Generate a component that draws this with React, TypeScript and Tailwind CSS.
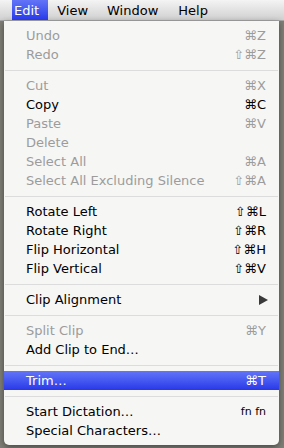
import React from 'react';

type Item =
  | { sep: true }
  | { label: string; key?: string; disabled?: boolean; active?: boolean; submenu?: boolean; small?: boolean };

const items: Item[] = [
  { label: 'Undo', key: '⌘Z', disabled: true },
  { label: 'Redo', key: '⇧⌘Z', disabled: true },
  { sep: true },
  { label: 'Cut', key: '⌘X', disabled: true },
  { label: 'Copy', key: '⌘C' },
  { label: 'Paste', key: '⌘V', disabled: true },
  { label: 'Delete', disabled: true },
  { label: 'Select All', key: '⌘A', disabled: true },
  { label: 'Select All Excluding Silence', key: '⇧⌘A', disabled: true },
  { sep: true },
  { label: 'Rotate Left', key: '⇧⌘L' },
  { label: 'Rotate Right', key: '⇧⌘R' },
  { label: 'Flip Horizontal', key: '⇧⌘H' },
  { label: 'Flip Vertical', key: '⇧⌘V' },
  { sep: true },
  { label: 'Clip Alignment', submenu: true },
  { sep: true },
  { label: 'Split Clip', key: '⌘Y', disabled: true },
  { label: 'Add Clip to End…' },
  { sep: true },
  { label: 'Trim…', key: '⌘T', active: true },
  { sep: true },
  { label: 'Start Dictation…', key: 'fn fn', small: true },
  { label: 'Special Characters…' },
];

function Row({ item }: { item: Exclude<Item, { sep: true }> }) {
  const color = item.active
    ? 'text-white bg-gradient-to-b from-[#6474f7] to-[#2a36e9]'
    : item.disabled
      ? 'text-[#9c9c9c]'
      : 'text-black';
  return (
    <div className={`flex h-[19px] items-center justify-between pl-[22px] pr-[13px] ${color}`}>
      <span>{item.label}</span>
      {item.key && <span className={item.small ? 'text-[11px]' : ''}>{item.key}</span>}
      {item.submenu && (
        <svg width="9" height="10" viewBox="0 0 9 10" className="mr-[-2px]">
          <path d="M0 0 L9 5 L0 10 Z" fill="#3a3a3a" />
        </svg>
      )}
    </div>
  );
}

export default function App() {
  return (
    <div
      className="w-[284px] h-[448px] bg-[#7f7e76] overflow-hidden text-[13px] leading-[19px]"
      style={{ fontFamily: '"DejaVu Sans", sans-serif' }}
    >
      <div className="flex h-[21px] items-stretch bg-gradient-to-b from-[#f4f4f4] to-[#d0d0d0] border-b border-[#a8a8a8] text-black leading-[21px]">
        <div className="ml-[12px] pl-[2px] pr-[9px] text-white bg-gradient-to-b from-[#6474f7] to-[#2a36e9]">Edit</div>
        <div className="px-[9px]">View</div>
        <div className="pl-[10px] pr-[10px]">Window</div>
        <div className="pl-[10px]">Help</div>
      </div>
      <div className="ml-[4px] w-[275px] bg-[#f6f6f5] rounded-b-[5px] pt-[5px] pb-[5px] shadow-[0_2px_6px_rgba(0,0,0,0.45)]">
        {items.map((it, i) =>
          'sep' in it ? (
            <div key={i} className="h-[12px] flex items-center px-[1px]">
              <div className="h-px w-full bg-[#dcdcdc]" />
            </div>
          ) : (
            <Row key={i} item={it} />
          ),
        )}
      </div>
    </div>
  );
}
